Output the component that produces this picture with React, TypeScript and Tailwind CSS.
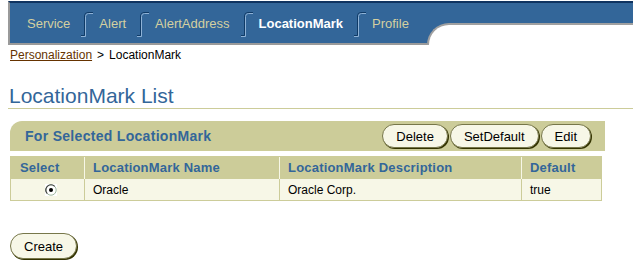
import React from "react";

const font = { fontFamily: '"Liberation Sans", Arial, sans-serif' };

function Sep() {
  return (
    <svg width="12" height="26" viewBox="0 0 12 26" className="ml-[11px] mr-[6px] shrink-0">
      <path d="M0 24.5 H3.5 V5 Q3.5 1.5 7 1.5 H12" fill="none" stroke="#0f3a66" strokeWidth="1" />
      <path d="M0 25.5 H4.5 V5.5 Q4.5 2.5 7.5 2.5 H12" fill="none" stroke="#8fb2d6" strokeWidth="1" />
    </svg>
  );
}

function Btn({ children, h = "h-[24px]" }: { children: React.ReactNode; h?: string }) {
  return (
    <button
      className={`${h} px-[13px] rounded-full bg-[#f7f7e7] border border-[#77774a] shadow-[1px_1px_0_0_#333300] text-[13px] text-black leading-none flex items-center`}
    >
      {children}
    </button>
  );
}

function Radio() {
  return (
    <svg width="12" height="12" viewBox="0 0 12 12">
      <rect x="0" y="0" width="12" height="12" fill="#ffffff" />
      <circle cx="6" cy="6" r="5.2" fill="#ffffff" stroke="#9fb89f" strokeWidth="1" />
      <path d="M2.3 9.7 A5.2 5.2 0 0 1 9.7 2.3" fill="none" stroke="#404040" strokeWidth="1.2" />
      <circle cx="6" cy="6" r="2" fill="#000000" />
    </svg>
  );
}

export default function App() {
  const tab = "text-[13px] text-[#d4d0a0] whitespace-nowrap";
  return (
    <div className="w-[633px] h-[269px] bg-white overflow-hidden" style={font}>
      {/* Tab bar */}
      <div className="flex mt-[1px] ml-[8px] h-[44px]">
        <div className="w-[419px] h-[44px] bg-[#336699] border-t-2 border-t-[#0f3360] border-l-2 border-l-[#9a9a9a] border-b-2 border-b-[#9a9a9a] flex items-center pl-[17px] pt-[1px]">
          <span className={tab}>Service</span>
          <Sep />
          <span className={tab}>Alert</span>
          <Sep />
          <span className={tab}>AlertAddress</span>
          <Sep />
          <span className="text-[13px] text-white font-bold whitespace-nowrap">LocationMark</span>
          <Sep />
          <span className={tab}>Profile</span>
        </div>
        <div className="flex-1 flex flex-col bg-[#336699] border-t-2 border-t-[#0f3360]">
          <div className="h-[20px]" />
          <div className="flex-1 bg-white rounded-tl-[22px] border-t-2 border-l-2 border-[#a0a0a0]" />
        </div>
      </div>

      {/* Breadcrumb */}
      <div className="mt-[2px] h-[16px] pl-[10px] flex items-center text-[12px] text-black">
        <span className="underline text-[#663300]">Personalization</span>
        <span className="ml-[5px] mr-[5px]">&gt;</span>
        <span>LocationMark</span>
      </div>

      {/* Heading */}
      <div className="mt-[21px] ml-[8px] border-b border-[#cccc99] pl-[1px]">
        <div className="text-[21px] leading-[24px] text-[#336699]">LocationMark List</div>
      </div>

      {/* Action bar */}
      <div className="mt-[12px] ml-[10px] w-[595px] h-[30px] bg-[#cccc99] rounded-tl-[12px] flex items-center justify-between pl-[15px] pr-[14px]">
        <span className="text-[14px] font-bold text-[#336699] tracking-[0.3px]">For Selected LocationMark</span>
        <div className="flex gap-[2px]">
          <Btn>Delete</Btn>
          <Btn>SetDefault</Btn>
          <Btn>Edit</Btn>
        </div>
      </div>

      {/* Table */}
      <div className="mt-[5px] ml-[10px] w-[592px] border border-[#cccc99]">
        <div className="flex h-[22px] bg-[#cccc99] text-[13px] font-bold text-[#336699] tracking-[0.2px]">
          <div className="w-[73px] pl-[9px] flex items-center">Select</div>
          <div className="w-[195px] border-l border-[#f7f7e7] pl-[8px] flex items-center">LocationMark Name</div>
          <div className="w-[242px] border-l border-[#f7f7e7] pl-[8px] flex items-center">LocationMark Description</div>
          <div className="flex-1 border-l border-[#f7f7e7] pl-[8px] flex items-center">Default</div>
        </div>
        <div className="flex h-[21px] bg-[#f7f7e7] text-[12px] text-black">
          <div className="w-[73px] pl-[34px] flex items-center">
            <Radio />
          </div>
          <div className="w-[195px] border-l border-[#cccc99] pl-[8px] flex items-center">Oracle</div>
          <div className="w-[242px] border-l border-[#cccc99] pl-[8px] flex items-center">Oracle Corp.</div>
          <div className="flex-1 border-l border-[#cccc99] pl-[8px] flex items-center">true</div>
        </div>
      </div>

      {/* Create */}
      <div className="mt-[32px] ml-[10px] flex">
        <Btn h="h-[26px]">Create</Btn>
      </div>
    </div>
  );
}
